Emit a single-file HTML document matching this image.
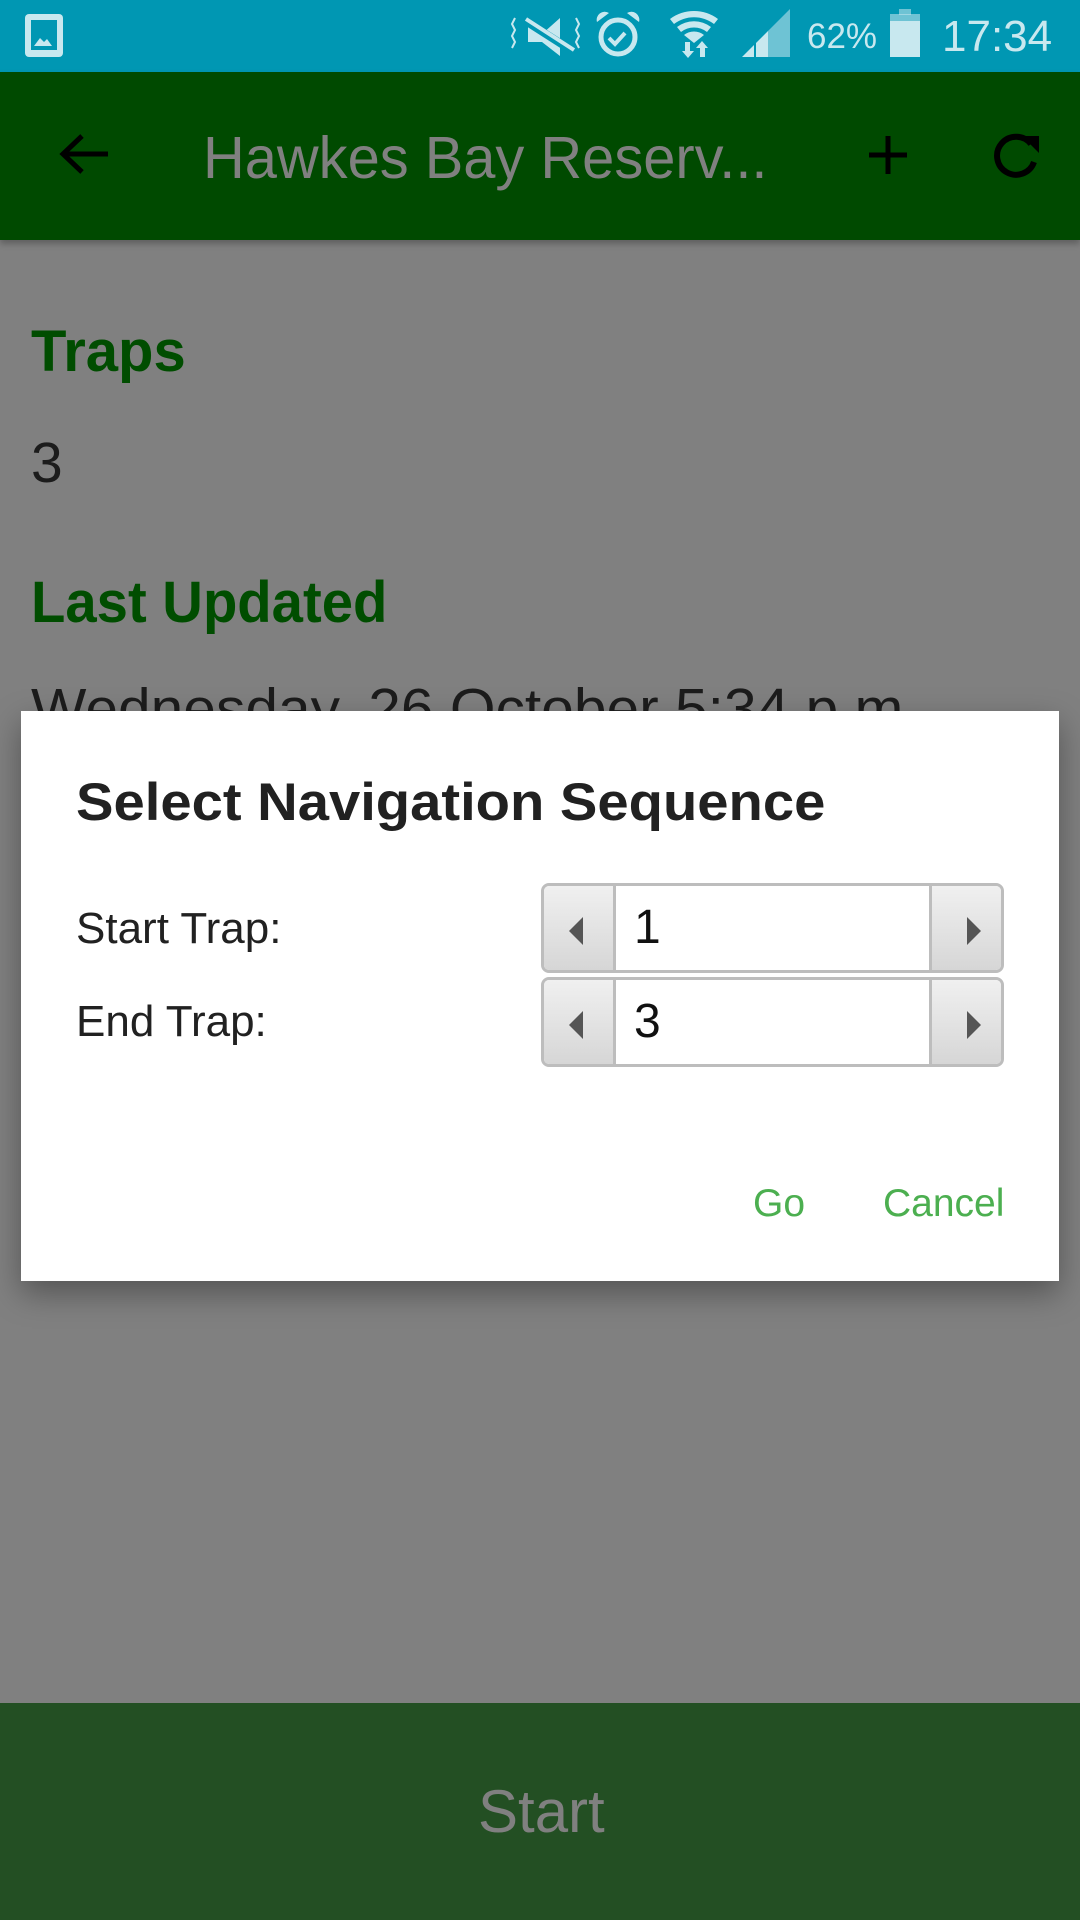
<!DOCTYPE html>
<html><head><meta charset="utf-8"><style>
*{margin:0;padding:0;box-sizing:border-box}
body{width:1080px;height:1920px;position:relative;overflow:hidden;background:#808080;font-family:"Liberation Sans",sans-serif}
.a{position:absolute;white-space:nowrap}
.sq{display:inline-block;transform-origin:0 0}
.spin{position:absolute;left:541px;width:463px;height:90px;border:3px solid #bdbdbd;border-radius:8px;background:#fff;overflow:hidden}
.spin .b{position:absolute;top:0;bottom:0;width:72px;background:linear-gradient(#f0f0f0,#d6d6d6)}
.spin .l{left:0;border-right:3px solid #bdbdbd}
.spin .r{right:0;border-left:3px solid #bdbdbd}
.spin .v{position:absolute;left:90px;top:14px;font-size:48px;color:#111}
</style></head><body>
<div class="a" style="left:0;top:0;width:1080px;height:72px;background:#0097b3"></div>
<svg class="a" style="left:0;top:0" width="1080" height="72">
<g><rect x="25" y="14" width="38" height="43" rx="4" fill="#c8e8ef"/><rect x="31" y="20" width="26" height="30" fill="#0097b3"/><path d="M34 46l6-8 4 4 3-3 5 7z" fill="#c8e8ef"/></g>
<g fill="#c8e8ef">
<path d="M528 24l14 10 18-16v38l-18-14-14 0z"/>
<path d="M524 20l50 32" stroke="#0097b3" stroke-width="8"/><path d="M526 19l48 31" stroke="#c8e8ef" stroke-width="4"/>
<path d="M515 18l-3 6 3 6-3 6 3 6-3 6" fill="none" stroke="#c8e8ef" stroke-width="2"/>
<path d="M576 18l3 6-3 6 3 6-3 6 3 6" fill="none" stroke="#c8e8ef" stroke-width="2"/>
<circle cx="618" cy="37" r="17" fill="none" stroke="#c8e8ef" stroke-width="5"/>
<path d="M609 38l6 6 10-11" fill="none" stroke="#c8e8ef" stroke-width="4"/>
<path d="M597 22a8 8 0 0 1 12-9z M639 22a8 8 0 0 0-12-9z"/>
<path d="M670 19a40 40 0 0 1 48 0l-4 5a33 33 0 0 0-40 0z M677 27a28 28 0 0 1 34 0l-4 5a21 21 0 0 0-26 0z M684 35a16 16 0 0 1 20 0l-10 8z"/>
<path d="M685 42h5v9h4l-6 7-6-7h3z M696 48l6-7 6 7h-3v9h-5v-9z"/>
<path d="M742 57l12-12v12z M756 43l12-12v26h-12z"/><path d="M768 31l22-22v48h-22z" opacity="0.55"/>
<rect x="890" y="21" width="30" height="36"/><rect x="890" y="14" width="30" height="15" opacity="0.55"/><rect x="899" y="9" width="12" height="6" opacity="0.55"/>
</g>
</svg>
<div class="a" style="left:807px;top:17px;font-size:35px;color:#c8e8ef">62%</div>
<div class="a" style="left:942px;top:12px;font-size:44px;color:#c8e8ef">17:34</div>
<div class="a" style="left:0;top:72px;width:1080px;height:168px;background:#004a00;box-shadow:0 4px 6px rgba(0,0,0,.25)"></div>
<svg class="a" style="left:0;top:72px" width="1080" height="168">
<path d="M108 82H64M82 64L63 82l19 18" fill="none" stroke="#000" stroke-width="5"/>
<path d="M888 64v38M869 83h38" stroke="#000" stroke-width="5"/>
<path d="M1031 72a19 19 0 1 0 3 18" fill="none" stroke="#000" stroke-width="6"/>
<path d="M1022 64h17v17z" fill="#000"/>
</svg>
<div class="a" style="left:203px;top:124px;font-size:59px;color:#808080"><span class="sq" style="transform:scaleX(.98)">Hawkes Bay Reserv...</span></div>
<div class="a" style="left:31px;top:318px;font-size:58px;font-weight:bold;color:#004d00">Traps</div>
<div class="a" style="left:31px;top:430px;font-size:57px;color:#1c1c1c">3</div>
<div class="a" style="left:31px;top:569px;font-size:58px;font-weight:bold;color:#004d00"><span class="sq" style="transform:scaleX(.97)">Last Updated</span></div>
<div class="a" style="left:31px;top:676px;font-size:57px;color:#1c1c1c"><span class="sq" style="transform:scaleX(1.03)">Wednesday, 26 October 5:34 p.m.</span></div>
<div class="a" style="left:21px;top:711px;width:1038px;height:570px;background:#fff;box-shadow:0 12px 30px rgba(0,0,0,.35)"></div>
<div class="a" style="left:76px;top:772px;font-size:53px;font-weight:bold;color:#212121"><span class="sq" style="transform:scaleX(1.06)">Select Navigation Sequence</span></div>
<div class="a" style="left:76px;top:904px;font-size:44px;color:#212121">Start Trap:</div>
<div class="a" style="left:76px;top:997px;font-size:44px;color:#212121">End Trap:</div>
<div class="spin" style="top:883px"><div class="b l"></div><div class="b r"></div><div class="v">1</div>
<svg class="a" style="left:0;top:0" width="463" height="90"><path d="M39 31v28l-14-14z" fill="#555"/><path d="M423 31v28l14-14z" fill="#555"/></svg></div>
<div class="spin" style="top:977px"><div class="b l"></div><div class="b r"></div><div class="v">3</div>
<svg class="a" style="left:0;top:0" width="463" height="90"><path d="M39 31v28l-14-14z" fill="#555"/><path d="M423 31v28l14-14z" fill="#555"/></svg></div>
<div class="a" style="left:753px;top:1182px;font-size:39px;color:#4caf50">Go</div>
<div class="a" style="left:883px;top:1182px;font-size:39px;color:#4caf50">Cancel</div>
<div class="a" style="left:0;top:1703px;width:1080px;height:217px;background:#234f23"></div>
<div class="a" style="left:478px;top:1777px;font-size:60px;color:#808080">Start</div>
</body></html>
